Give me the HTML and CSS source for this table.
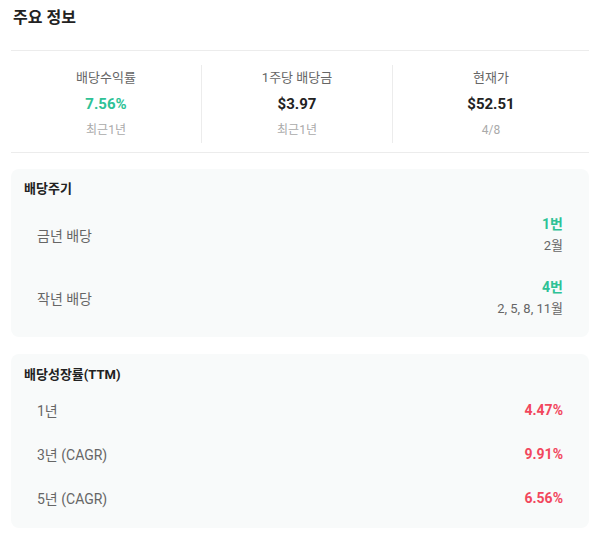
FILE: index.html
```html
<!DOCTYPE html>
<html lang="ko">
<head>
<meta charset="utf-8">
<link rel="stylesheet" href="styles.css">
</head>
<body>
<div class="page">
  <div class="header"><h2 class="title">주요 정보</h2></div>
  <div class="stats">
    <div class="stat">
      <div class="stat-label">배당수익률</div>
      <div class="stat-value green">7.56%</div>
      <div class="stat-sub">최근1년</div>
    </div>
    <div class="stat">
      <div class="stat-label">1주당 배당금</div>
      <div class="stat-value">$3.97</div>
      <div class="stat-sub">최근1년</div>
    </div>
    <div class="stat">
      <div class="stat-label">현재가</div>
      <div class="stat-value">$52.51</div>
      <div class="stat-sub">4/8</div>
    </div>
  </div>

  <div class="card card-cycle">
    <div class="card-title">배당주기</div>
    <div class="cycle-rows">
      <div class="cycle-row">
        <div class="row-label">금년 배당</div>
        <div class="cycle-right">
          <div class="count green">1번</div>
          <div class="months">2월</div>
        </div>
      </div>
      <div class="cycle-row">
        <div class="row-label">작년 배당</div>
        <div class="cycle-right">
          <div class="count green">4번</div>
          <div class="months">2, 5, 8, 11월</div>
        </div>
      </div>
    </div>
  </div>

  <div class="card card-growth">
    <div class="card-title">배당성장률(TTM)</div>
    <div class="growth-row">
      <div class="row-label">1년</div>
      <div class="rate red">4.47%</div>
    </div>
    <div class="growth-row">
      <div class="row-label">3년 (CAGR)</div>
      <div class="rate red">9.91%</div>
    </div>
    <div class="growth-row">
      <div class="row-label">5년 (CAGR)</div>
      <div class="rate red">6.56%</div>
    </div>
  </div>
</div>
</body>
</html>
```

FILE: styles.css
```css
* { box-sizing: border-box; }
body {
  margin: 0;
  background: #fff;
  font-family: Roboto, "Noto Sans CJK KR", sans-serif;
  color: #222;
}
.page {
  padding: 0 8px 0 11px;
}
.header {
  height: 51px;
  padding: 7px 2px 0;
  border-bottom: 1px solid #ececec;
}
.title {
  margin: 0;
  font-size: 16px;
  line-height: 22px;
  font-weight: 700;
  color: #222;
}
.stats {
  display: grid;
  grid-template-columns: 190px 191px 1fr;
  padding: 14px 0 9px;
  border-bottom: 1px solid #ececec;
}
.stat {
  height: 78px;
  text-align: center;
  border-left: 1px solid #ececec;
}
.stat:first-child { border-left: none; }
.stat-label {
  font-size: 13px;
  line-height: 24px;
  padding-top: 1px;
  color: #666;
}
.stat-value {
  font-size: 15px;
  line-height: 28px;
  font-weight: 700;
  color: #222;
}
.stat-sub {
  font-size: 12px;
  line-height: 24px;
  color: #aaa;
}
.green { color: #2ec296; }
.red { color: #f2475d; }
.card {
  background: #f8fafa;
  border-radius: 8px;
  margin-top: 16px;
}
.card-title {
  font-size: 13px;
  font-weight: 700;
  line-height: 20px;
  color: #222;
  padding-left: 13px;
}
.card-cycle {
  height: 168px;
  padding: 10px 26px 18px 0;
}
.cycle-rows {
  display: flex;
  flex-direction: column;
  gap: 21px;
  margin-top: 15px;
}
.cycle-row {
  display: flex;
  align-items: center;
  justify-content: space-between;
  height: 42px;
}
.row-label {
  padding-left: 26px;
  font-size: 14px;
  color: #666;
}
.cycle-right {
  text-align: right;
}
.count {
  font-size: 14px;
  font-weight: 700;
  line-height: 21px;
}
.months {
  font-size: 13px;
  line-height: 21px;
  color: #666;
}
.card-growth {
  height: 174px;
  margin-top: 17px;
  padding: 11px 26px 8px 0;
}
.card-growth .card-title {
  margin-bottom: 3px;
}
.growth-row {
  display: flex;
  align-items: center;
  justify-content: space-between;
  height: 44px;
}
.rate {
  font-size: 14px;
  font-weight: 700;
}
```
